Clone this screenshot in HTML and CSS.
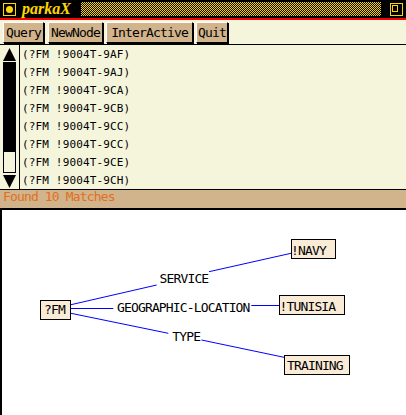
FILE: index.html
```html
<!DOCTYPE html>
<html lang="en">
<head>
    <meta charset="UTF-8">
    <meta name="viewport" content="width=device-width, initial-scale=1.0">
    <title>parkaX</title>
    <link rel="stylesheet" href="styles.css">
</head>
<body>
    <div class="window">
        <div class="titlebar">
            <svg class="ticon" viewBox="0 0 13 13">
                <rect x="0.5" y="0.5" width="12" height="12" fill="none" stroke="#ffd700"/>
                <circle cx="6.5" cy="6.5" r="3.5" fill="#ffd700"/>
            </svg>
            <span class="title">parkaX</span>
            <div class="stipple"></div>
            <svg class="ticon" viewBox="0 0 13 13">
                <rect x="0.5" y="0.5" width="12" height="12" fill="none" stroke="#ffd700"/>
                <rect x="2.5" y="2.5" width="5" height="6" fill="none" stroke="#ffd700"/>
            </svg>
        </div>

        <div class="menubar">
            <button class="btn btn-query">Query</button>
            <button class="btn btn-newnode">NewNode</button>
            <button class="btn btn-interactive">InterActive</button>
            <button class="btn btn-quit">Quit</button>
        </div>

        <div class="listpane">
            <div class="scrollbar">
                <svg class="arrow" viewBox="0 0 13 13"><polygon points="6.5,0 13,13 0,13" fill="#000"/></svg>
                <div class="track"><div class="thumb"></div></div>
                <svg class="arrow" viewBox="0 0 13 13"><polygon points="0,0 13,0 6.5,13" fill="#000"/></svg>
            </div>
            <ul class="matches">
                <li>(?FM !9004T-9AF)</li>
                <li>(?FM !9004T-9AJ)</li>
                <li>(?FM !9004T-9CA)</li>
                <li>(?FM !9004T-9CB)</li>
                <li>(?FM !9004T-9CC)</li>
                <li>(?FM !9004T-9CC)</li>
                <li>(?FM !9004T-9CE)</li>
                <li>(?FM !9004T-9CH)</li>
            </ul>
        </div>

        <div class="status">Found 10 Matches</div>

        <div class="canvas">
            <svg class="graph" width="406" height="205" viewBox="0 0 406 205">
                <!-- edges -->
                <g stroke="#0000ff" stroke-width="1" fill="none">
                    <line x1="71" y1="94.7" x2="156.7" y2="75"/>
                    <line x1="209" y1="61.7" x2="291" y2="43.3"/>
                    <line x1="71" y1="98.5" x2="113.3" y2="98.5"/>
                    <line x1="251.3" y1="95.5" x2="279" y2="95.5"/>
                    <line x1="71" y1="103.3" x2="168.3" y2="123.3"/>
                    <line x1="201.5" y1="130" x2="284" y2="147.3"/>
                </g>

                <!-- nodes -->
                <rect class="node" x="40.5" y="90.5" width="30" height="19"/>
                <text class="lbl" x="44" y="104.3">?FM</text>

                <rect class="node" x="291.5" y="29.5" width="44" height="19"/>
                <text class="lbl" x="291" y="45">!NAVY</text>

                <rect class="node" x="279.5" y="85.5" width="65" height="19"/>
                <text class="lbl" x="279.5" y="101">!TUNISIA</text>

                <rect class="node" x="284.5" y="145.5" width="65" height="19"/>
                <text class="lbl" x="287" y="160">TRAINING</text>

                <!-- relation labels -->
                <text class="lbl" x="159.5" y="73.3">SERVICE</text>
                <text class="lbl" x="117" y="101.7">GEOGRAPHIC-LOCATION</text>
                <text class="lbl" x="172.3" y="131">TYPE</text>
            </svg>
        </div>
    </div>
</body>
</html>
```

FILE: styles.css
```css
body {
    margin: 0;
    background: #fff;
    font-family: "DejaVu Sans Mono", monospace;
}
.window {
    width: 406px;
    height: 415px;
    display: flex;
    flex-direction: column;
    overflow: hidden;
}
.titlebar {
    height: 18px;
    background: #000;
    border-bottom: 2px solid #ff0000;
    display: flex;
    align-items: center;
    padding: 0 3px;
    flex-shrink: 0;
}
.ticon {
    width: 13px;
    height: 13px;
    display: block;
    flex-shrink: 0;
}
.title {
    font: italic bold 16px/16px "Liberation Serif", serif;
    color: #ffd700;
    margin-left: 6px;
    width: 52px;
}
.stipple {
    flex: 1;
    height: 14px;
    margin: 0 9px 0 7px;
    background: conic-gradient(#ffd700 0 25%, #000 0 50%, #ffd700 0 75%, #000 0);
    background-size: 2px 2px;
}
.menubar {
    height: 22px;
    padding: 2px 0 0 3px;
    background: #f5f5dc;
    border-bottom: 1px solid #000;
    display: flex;
    align-items: flex-start;
    gap: 3px;
    flex-shrink: 0;
}
.btn {
    font: 13px/19px "DejaVu Sans Mono", monospace;
    letter-spacing: -0.85px;
    height: 21px;
    box-sizing: border-box;
    padding: 0;
    margin: 0;
    background: #d2b48c;
    color: #000;
    border: 1px solid;
    border-color: #fff #000 #000 #fff;
    box-shadow: 1px 1px 0 #000;
    text-align: center;
}
.btn-query { width: 41px; }
.btn-newnode { width: 55px; margin-left: 1px; }
.btn-interactive { width: 87px; }
.btn-quit { width: 32px; }
.listpane {
    height: 144px;
    background: #f5f5dc;
    display: flex;
    flex-shrink: 0;
}
.scrollbar {
    width: 20px;
    box-sizing: border-box;
    border-right: 1px solid #000;
    padding: 3px 0 1px;
    display: flex;
    flex-direction: column;
    align-items: center;
}
.arrow {
    width: 13px;
    height: 13px;
    display: block;
    flex-shrink: 0;
}
.track {
    flex: 1;
    width: 13px;
    box-sizing: border-box;
    margin: 1px 0 2px;
    border: 1px solid #000;
    border-top: 0;
}
.thumb {
    height: 90px;
    margin: 0 -1px;
    background: #000;
}
.matches {
    list-style: none;
    margin: 0;
    padding: 1px 0 0 2px;
    flex: 1;
    overflow: hidden;
    font: 11px/18px "DejaVu Sans Mono", monospace;
    letter-spacing: 0.15px;
    color: #000;
}
.status {
    height: 18px;
    background: #d2b48c;
    border-top: 1px solid #000;
    border-bottom: 2px solid #000;
    color: #e0701e;
    font: 13px/14px "DejaVu Sans Mono", monospace;
    letter-spacing: -0.85px;
    padding-left: 3px;
    flex-shrink: 0;
}
.canvas {
    flex: 1;
    background: #fff;
    box-shadow: inset 2px 0 0 #000;
}
.graph {
    display: block;
}
.node {
    fill: #faebd7;
    stroke: #000;
    stroke-width: 1;
}
.lbl {
    font-family: "DejaVu Sans Mono", monospace;
    font-size: 13px;
    letter-spacing: -0.85px;
    fill: #000;
}
```
